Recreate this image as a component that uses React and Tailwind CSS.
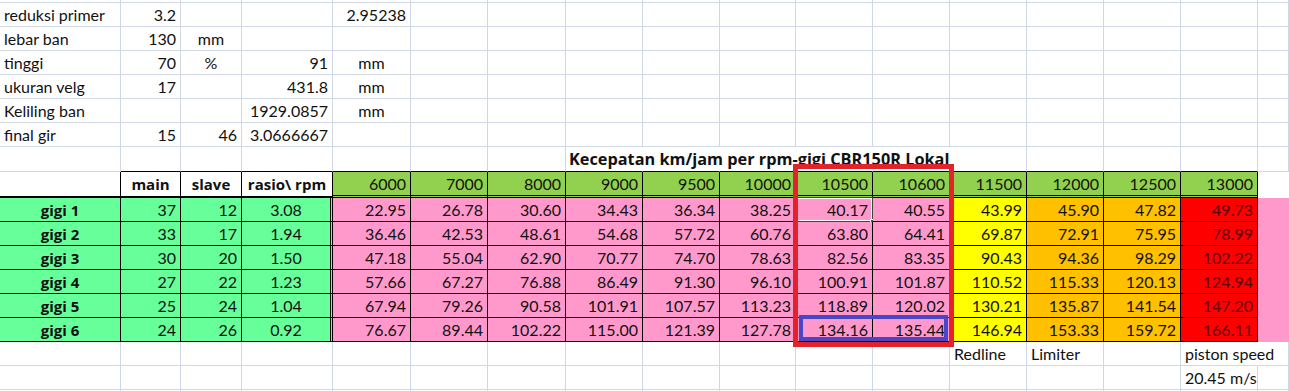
import clsx from "clsx";

const COLS =
  "grid grid-rows-1 grid-cols-[121px_60px_61px_91px_78px_77px_78px_77px_77px_76px_77px_77px_77px_77px_77px_77px_31px]";

const GRID = "border-[#d0d7e5]";
const BOLD = "font-['Open_Sans',sans-serif] font-bold text-[15px]";

const topRows = [
  ["reduksi primer", "3.2", "", "", "2.95238"],
  ["lebar ban", "130", "mm"],
  ["tinggi", "70", "%", "91", "mm"],
  ["ukuran velg", "17", "", "431.8", "mm"],
  ["Keliling ban", "", "", "1929.0857", "mm"],
  ["final gir", "15", "46", "3.0666667", ""],
];

const rpm = [6000, 7000, 8000, 9000, 9500, 10000, 10500, 10600, 11500, 12000, 12500, 13000];

const gears = [
  ["gigi 1", 37, 12, "3.08", ["22.95", "26.78", "30.60", "34.43", "36.34", "38.25", "40.17", "40.55", "43.99", "45.90", "47.82", "49.73"]],
  ["gigi 2", 33, 17, "1.94", ["36.46", "42.53", "48.61", "54.68", "57.72", "60.76", "63.80", "64.41", "69.87", "72.91", "75.95", "78.99"]],
  ["gigi 3", 30, 20, "1.50", ["47.18", "55.04", "62.90", "70.77", "74.70", "78.63", "82.56", "83.35", "90.43", "94.36", "98.29", "102.22"]],
  ["gigi 4", 27, 22, "1.23", ["57.66", "67.27", "76.88", "86.49", "91.30", "96.10", "100.91", "101.87", "110.52", "115.33", "120.13", "124.94"]],
  ["gigi 5", 25, 24, "1.04", ["67.94", "79.26", "90.58", "101.91", "107.57", "113.23", "118.89", "120.02", "130.21", "135.87", "141.54", "147.20"]],
  ["gigi 6", 24, 26, "0.92", ["76.67", "89.44", "102.22", "115.00", "121.39", "127.78", "134.16", "135.44", "146.94", "153.33", "159.72", "166.11"]],
];

// fill colour per speed column (6000 .. 13000)
const speedBg = (i) => {
  if (i < 8) return "bg-[#ff99cc]";
  if (i === 8) return "bg-[#ffff00]";
  if (i < 11) return "bg-[#ffc000]";
  return "bg-[#ff0000] text-[#5c0000]";
};

const Cell = ({ children, className, align = "left" }) => (
  <div
    className={clsx(
      "relative flex min-h-0 items-center border-r border-b px-[4px] leading-[18px] whitespace-nowrap overflow-visible",
      align === "right" && "justify-end",
      align === "center" && "justify-center",
      className
    )}
  >
    {children}
  </div>
);

const emptyRow = (h) => (
  <div className={clsx(COLS, h)}>
    {Array.from({ length: 17 }).map((_, i) => (
      <Cell key={i} className={GRID} />
    ))}
  </div>
);

const App = () => {
  return (
    <div className="relative h-[391px] w-[1289px] overflow-hidden bg-white font-['Lato',sans-serif] text-[16px] text-[#111]">
      {emptyRow("h-[3px]")}

      {topRows.map((row, r) => (
        <div key={r} className={clsx(COLS, "h-[24px]")}>
          {Array.from({ length: 17 }).map((_, i) => {
            const v = row[i] || "";
            const numeric = v !== "" && !isNaN(Number(v));
            const align = i === 0 ? "left" : numeric ? "right" : "center";
            return (
              <Cell key={i} className={GRID} align={align}>
                {v}
              </Cell>
            );
          })}
        </div>
      ))}

      {/* judul tabel */}
      <div className={clsx(COLS, "h-[25px]")}>
        {Array.from({ length: 17 }).map((_, i) => (
          <Cell
            key={i}
            className={clsx(
              GRID,
              i >= 1 && i <= 15 && "border-b-black",
              i >= 7 && i <= 11 && "border-r-transparent"
            )}
          >
            {i === 7 && (
              <span className="-ml-[1px] font-['Open_Sans',sans-serif] text-[16.3px] font-bold">
                Kecepatan km/jam per rpm-gigi CBR150R Lokal
              </span>
            )}
          </Cell>
        ))}
      </div>

      {/* header */}
      <div className={clsx(COLS, "h-[26px]")}>
        <Cell className="border-r-black border-b-2 border-b-black" />
        <Cell className={clsx("border-black border-b-2", BOLD)} align="center">main</Cell>
        <Cell className={clsx("border-black border-b-2", BOLD)} align="center">slave</Cell>
        <Cell className={clsx("border-black border-b-2", BOLD)} align="center">rasio\ rpm</Cell>
        {rpm.map((v) => (
          <Cell
            key={v}
            className="border-black border-double border-b-[3px] bg-[#92d050]"
            align="right"
          >
            {v}
          </Cell>
        ))}
        <Cell className="border-transparent" />
      </div>

      {gears.map(([name, main, slave, ratio, speeds], r) => (
        <div key={name} className={clsx(COLS, "h-[24px]")}>
          <Cell className={clsx("border-black bg-[#66ff99]", BOLD)} align="center">{name}</Cell>
          <Cell className="border-black bg-[#66ff99]" align="right">{main}</Cell>
          <Cell className="border-black bg-[#66ff99]" align="right">{slave}</Cell>
          <Cell
            className="border-black border-double border-r-[3px] bg-[#66ff99]"
            align="center"
          >
            {ratio}
          </Cell>
          {speeds.map((s, i) => (
            <Cell key={i} className={clsx("border-black", speedBg(i))} align="right">
              {s}
              {r === 0 && i === 6 && (
                <span className="pointer-events-none absolute -top-px -left-px -right-px -bottom-px border border-[#2f4f3a] shadow-[inset_0_0_0_1px_#ffffff]">
                  <span className="absolute -bottom-[3px] -right-[3px] h-[5px] w-[5px] border border-white bg-[#2f4f3a]" />
                </span>
              )}
            </Cell>
          ))}
          <Cell className="border-transparent bg-[#ff99cc]" />
        </div>
      ))}

      {/* keterangan */}
      <div className={clsx(COLS, "h-[24px]")}>
        {Array.from({ length: 17 }).map((_, i) => (
          <Cell key={i} className={clsx(GRID, i === 15 && "border-r-transparent")}>
            {i === 12 && "Redline"}
            {i === 13 && "Limiter"}
            {i === 15 && "piston speed"}
          </Cell>
        ))}
      </div>
      <div className={clsx(COLS, "h-[24px]")}>
        {Array.from({ length: 17 }).map((_, i) => (
          <Cell key={i} className={GRID}>
            {i === 15 && "20.45 m/s"}
          </Cell>
        ))}
      </div>
      {emptyRow("h-[24px]")}

      {/* penanda kotak merah & biru */}
      <div className="pointer-events-none absolute left-[793px] top-[164px] h-[183px] w-[161px] border-[5px] border-[#e3232b]" />
      <div className="pointer-events-none absolute left-[799px] top-[315px] h-[26px] w-[149px] border-4 border-[#4a46c6]" />
    </div>
  );
};

export default App;
